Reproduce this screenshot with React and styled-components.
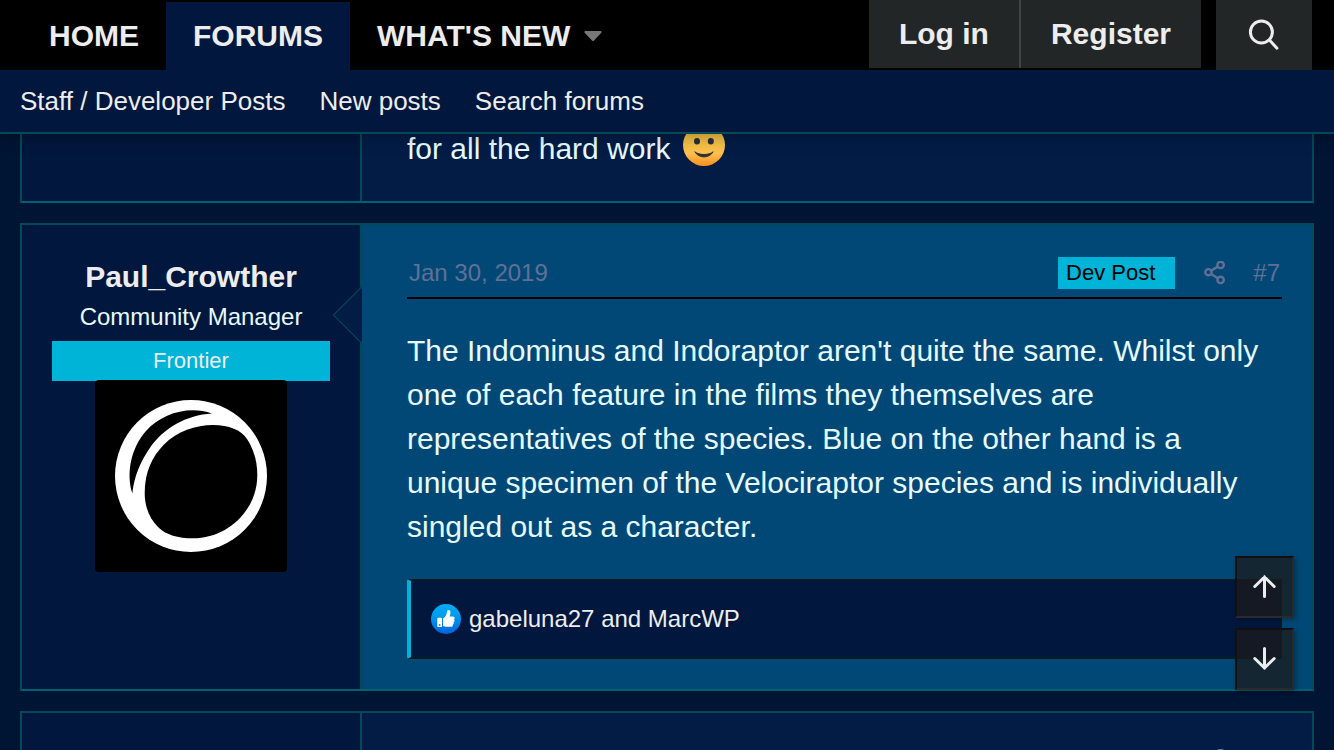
import React from 'react'
import styled, { createGlobalStyle } from 'styled-components';


const ShareIcon = () => (
  <svg width="22" height="24" viewBox="0 0 22 24" fill="none" stroke="currentColor" strokeWidth="2.4" aria-hidden="true">
    <circle cx="5.4" cy="11.2" r="3.1" />
    <circle cx="17.6" cy="3.9" r="3.2" />
    <circle cx="17.6" cy="18.9" r="3.2" />
    <path d="M8.2 9.6L14.8 5.6M8.2 13L14.8 17.2" />
  </svg>
)

const SearchIcon = () => (
  <svg width="32" height="32" viewBox="0 0 32 32" fill="none" stroke="currentColor" strokeWidth="3" strokeLinecap="round" aria-hidden="true">
    <circle cx="13.4" cy="13" r="11" />
    <path d="M21.4 21L29 29.2" />
  </svg>
)

const ArrowIcon = ({ down }) => (
  <svg width="23" height="24" viewBox="0 0 23 24" fill="none" stroke="currentColor" strokeWidth="3" strokeLinecap="round" aria-hidden="true">
    {down ? <path d="M11.5 1.5V21M1.8 11.5L11.5 21L21.2 11.5" /> : <path d="M11.5 21.5V2M1.8 11.5L11.5 2L21.2 11.5" />}
  </svg>
)

const Smile = () => (
  <svg width="42" height="42" viewBox="0 0 42 42" role="img" aria-label="Smile">
    <defs>
      <linearGradient id="face" x1="0" y1="0" x2="0" y2="1">
        <stop offset="0.2" stopColor="#ecc044" />
        <stop offset="0.7" stopColor="#ffc04d" />
        <stop offset="1" stopColor="#ff8e1f" />
      </linearGradient>
    </defs>
    <circle cx="21" cy="21" r="21" fill="url(#face)" />
    <ellipse cx="14" cy="17.2" rx="3" ry="3.3" fill="#2b2f3a" />
    <ellipse cx="27.8" cy="17.2" rx="3" ry="3.3" fill="#2b2f3a" />
    <path d="M11.8 27.8C16 34.6 26 34.6 30.2 27.8C26 31.4 16 31.4 11.8 27.8Z" fill="#2b2f3a" stroke="#2b2f3a" strokeWidth="1" strokeLinejoin="round" />
  </svg>
)

const LikeIcon = () => (
  <svg width="30" height="30" viewBox="0 0 30 30" role="img" aria-label="Like">
    <defs>
      <linearGradient id="like" x1="0" y1="0" x2="0" y2="1">
        <stop offset="0" stopColor="#00adf5" />
        <stop offset="0.4" stopColor="#009bee" />
        <stop offset="1" stopColor="#0062dc" />
      </linearGradient>
    </defs>
    <circle cx="15" cy="15" r="15" fill="url(#like)" />
    <path fill="#fff" d="M7 13.8h3.4c.3 0 .6.3.6.6v8c0 .3-.3.6-.6.6H7c-.4 0-.7-.3-.7-.6v-8c0-.3.3-.6.7-.6z" />
    <circle cx="8.6" cy="20.9" r=".9" fill="#007fe6" />
    <path fill="#fff" d="M12 14.6c1.9-1.2 3.3-3.4 3.7-5.3.3-1.6.4-3.2 1.7-3.2 1.8 0 2.3 1.7 2 3.5-.2 1-.5 1.9-.9 2.8h3.4c1.2 0 1.8.8 1.8 1.6 0 .6-.3 1.1-.7 1.4.4.3.6.8.5 1.4 0 .7-.4 1.2-.9 1.5.2.4.3.9.1 1.3-.1.5-.5.9-.9 1.1.2 1-.3 2.1-1.7 2.1h-3.9c-1.9 0-3-.5-4.2-.9z" />
  </svg>
)

const AvatarImage = () => (
  <svg width="192" height="192" viewBox="0 0 192 192" role="img" aria-label="Paul_Crowther">
    <rect width="192" height="192" fill="#000" />
    <circle cx="96" cy="96" r="76" fill="#fff" />
    <path fill="#000" d="M37.3 113.5C31 93 36 68 51 51C67 33 94 25.5 117 33.4C91 35 69 48 55.5 67C45 82 39 97 37.3 113.5Z" />
    <path fill="#000" d="M49.7 113C49.7 92 57 77 68.5 65C82 51 101 45 118 45C134 45 146 50 152 59C158.5 69 162.3 81 162.3 95C162.3 130 133 158.3 98 158.3C83 158.3 71 155 63 147C54 138 49.7 126 49.7 113Z" />
  </svg>
)

function PostHeader({ date, dev, number }) {
  return (
    <Attribution>
      {date && <time dateTime="2019-01-30">{date}</time>}
      <Actions>
        {dev && <DevBadge>Dev Post</DevBadge>}
        <MutedLink href="#share" aria-label="Share"><ShareIcon /></MutedLink>
        <MutedLink href={`#post-${number}`}>#{number}</MutedLink>
      </Actions>
    </Attribution>
  )
}

function App() {
  return (
    <Page>
      <GlobalStyle />
      <Header>
        <NavBar>
          <Tabs>
            <Tab href="#home">HOME</Tab>
            <Tab href="#forums" $active>FORUMS</Tab>
            <Tab href="#new">WHAT'S NEW <Caret viewBox="0 0 18 10" aria-hidden="true"><path d="M1 0H17Q18 1 17.3 1.8L10 9.4Q9 10.4 8 9.4L.7 1.8Q0 1 1 0Z" /></Caret></Tab>
          </Tabs>
          <Account>
            <AccountLink href="#login">Log in</AccountLink>
            <AccountLink href="#register">Register</AccountLink>
          </Account>
          <SearchButton type="button" aria-label="Search"><SearchIcon /></SearchButton>
        </NavBar>
        <SubNav>
          <a href="#staff">Staff / Developer Posts</a>
          <a href="#posts">New posts</a>
          <a href="#search">Search forums</a>
        </SubNav>
      </Header>

      <Posts>
        <Post>
          <UserCell />
          <Content>
            <Message>for all the hard work <Smile /></Message>
          </Content>
        </Post>

        <Post>
          <UserCell $arrow>
            <UserName href="#paul">Paul_Crowther</UserName>
            <UserTitle>Community Manager</UserTitle>
            <Banner>Frontier</Banner>
            <Avatar href="#paul"><AvatarImage /></Avatar>
          </UserCell>
          <Content $dev>
            <PostHeader date="Jan 30, 2019" dev number={7} />
            <Message>
              The Indominus and Indoraptor aren't quite the same. Whilst only one of each feature in the films they themselves are representatives of the species. Blue on the other hand is a unique specimen of the Velociraptor species and is individually singled out as a character.
            </Message>
            <Reactions>
              <LikeIcon />
              <a href="#reactions">gabeluna27 and MarcWP</a>
            </Reactions>
          </Content>
        </Post>

        <Post>
          <UserCell />
          <Content>
            <PostHeader number={8} />
          </Content>
        </Post>
      </Posts>

      <ScrollButtons>
        <ScrollButton type="button" aria-label="Top"><ArrowIcon /></ScrollButton>
        <ScrollButton type="button" aria-label="Bottom"><ArrowIcon down /></ScrollButton>
      </ScrollButtons>
    </Page>
  );
}

const GlobalStyle = createGlobalStyle`
  * {
    box-sizing: border-box;
  }
  body {
    margin: 0;
    background: #001434;
    color: #e6fbff;
    font-family: "Helvetica Neue", "Liberation Sans", Arial, sans-serif;
  }
  a {
    color: inherit;
    text-decoration: none;
  }
  svg {
    flex-shrink: 0;
  }
`;

const Page = styled.div`
  height: 100vh;
  overflow: hidden;
`;

const Header = styled.header`
  position: fixed;
  top: 0;
  left: 0;
  right: 0;
  z-index: 10;
  box-shadow: 0 2px 16px rgba(0, 0, 0, 0.3);
`;

const NavBar = styled.nav`
  display: flex;
  height: 70px;
  padding: 0 22px;
  background: #000;
  color: #ededed;
  font-size: 30px;
  font-weight: 700;
`;

const Tabs = styled.div`
  display: flex;
  flex: 1;
  padding-top: 2px;
`;

const Tab = styled.a`
  display: flex;
  align-items: center;
  padding: 0 27px;
  white-space: nowrap;
  background: ${(props) => (props.$active ? '#02173d' : 'transparent')};
`;

const Caret = styled.svg`
  width: 18px;
  height: 10px;
  margin-left: 14px;
  fill: #777;
`;

const Account = styled.div`
  display: flex;
  height: 68px;
  margin-right: 15px;
`;

const AccountLink = styled.a`
  display: flex;
  align-items: center;
  padding: 0 30px;
  background: #232626;

  & + & {
    border-left: 2px solid #424545;
  }
`;

const SearchButton = styled.button`
  display: flex;
  align-items: center;
  justify-content: center;
  width: 96px;
  padding: 0;
  border: 0;
  background: #232626;
  color: #ededed;
`;

const SubNav = styled.nav`
  display: flex;
  gap: 34px;
  padding: 0 20px;
  border-bottom: 2px solid #014a56;
  background: #02173d;
  color: #ededed;
  font-size: 26px;
  line-height: 62px;
`;

const Posts = styled.main`
  display: flex;
  flex-direction: column;
  gap: 20px;
  padding: 62px 20px 0;
`;

const Post = styled.article`
  display: flex;
  border: 2px solid #014a56;
  border-bottom-color: #00616e;
`;

const UserCell = styled.section`
  position: relative;
  display: flex;
  flex-direction: column;
  align-items: center;
  flex: 0 0 340px;
  padding: 30px;
  border-right: 2px solid #014a56;
  background: #02173d;

  &::after {
    content: "";
    display: ${(props) => (props.$arrow ? 'block' : 'none')};
    position: absolute;
    top: 70px;
    right: -21px;
    width: 38px;
    height: 38px;
    border: 1px solid #014a56;
    background: #031c46;
    transform: rotate(45deg);
  }
`;

const Content = styled.section`
  position: relative;
  z-index: 1;
  flex: 1;
  min-width: 0;
  padding: 30px 30px 30px 45px;
  background: ${(props) => (props.$dev ? '#024876' : '#031c46')};
`;

const UserName = styled.a`
  color: #ededed;
  font-size: 30px;
  font-weight: 700;
  line-height: 44px;
`;

const UserTitle = styled.div`
  margin-bottom: 6px;
  font-size: 24px;
  line-height: 36px;
`;

const Banner = styled.div`
  align-self: stretch;
  background: #00b4d8;
  color: #ededed;
  font-size: 22px;
  line-height: 40px;
  text-align: center;
`;

const Avatar = styled.a`
  display: block;
  height: 192px;
  margin-top: -1px;
  border-radius: 4px;
  overflow: hidden;
`;

const Attribution = styled.header`
  display: flex;
  align-items: center;
  height: 44px;
  padding: 2px 2px 8px;
  border-bottom: 2px solid #000;
  color: #5f7096;
  font-size: 24px;
`;

const Actions = styled.div`
  display: flex;
  align-items: center;
  gap: 28px;
  margin-left: auto;
`;

const DevBadge = styled.span`
  padding: 0 20px 0 8px;
  background: #00b4d8;
  color: #000;
  font-size: 22px;
  line-height: 32px;
`;

const MutedLink = styled.a`
  display: flex;
`;

const Message = styled.div`
  padding: 30px 8px 0 0;
  font-size: 30px;
  line-height: 44px;

  svg {
    margin-left: 4px;
    vertical-align: -7px;
  }
`;

const Reactions = styled.div`
  display: flex;
  align-items: center;
  gap: 8px;
  height: 80px;
  margin-top: 30px;
  padding: 0 20px;
  border: 2px solid #041c22;
  border-left: 4px solid #00b4d8;
  border-radius: 2px;
  background: #02173d;
  color: #ededed;
  font-size: 24px;
`;

const ScrollButtons = styled.div`
  position: fixed;
  right: 40px;
  bottom: 60px;
  z-index: 5;
  display: flex;
  flex-direction: column;
  gap: 10px;
`;

const ScrollButton = styled.button`
  display: flex;
  align-items: center;
  justify-content: center;
  width: 59px;
  height: 62px;
  padding: 0;
  border: 2px solid #101010;
  border-right-color: #2a2a2a;
  border-bottom-color: #2a2a2a;
  background: rgba(27, 27, 27, 0.75);
  background-clip: padding-box;
  box-shadow: 2px 2px 5px rgba(0, 0, 0, 0.3);
  color: #ededed;
`;

export default App;
